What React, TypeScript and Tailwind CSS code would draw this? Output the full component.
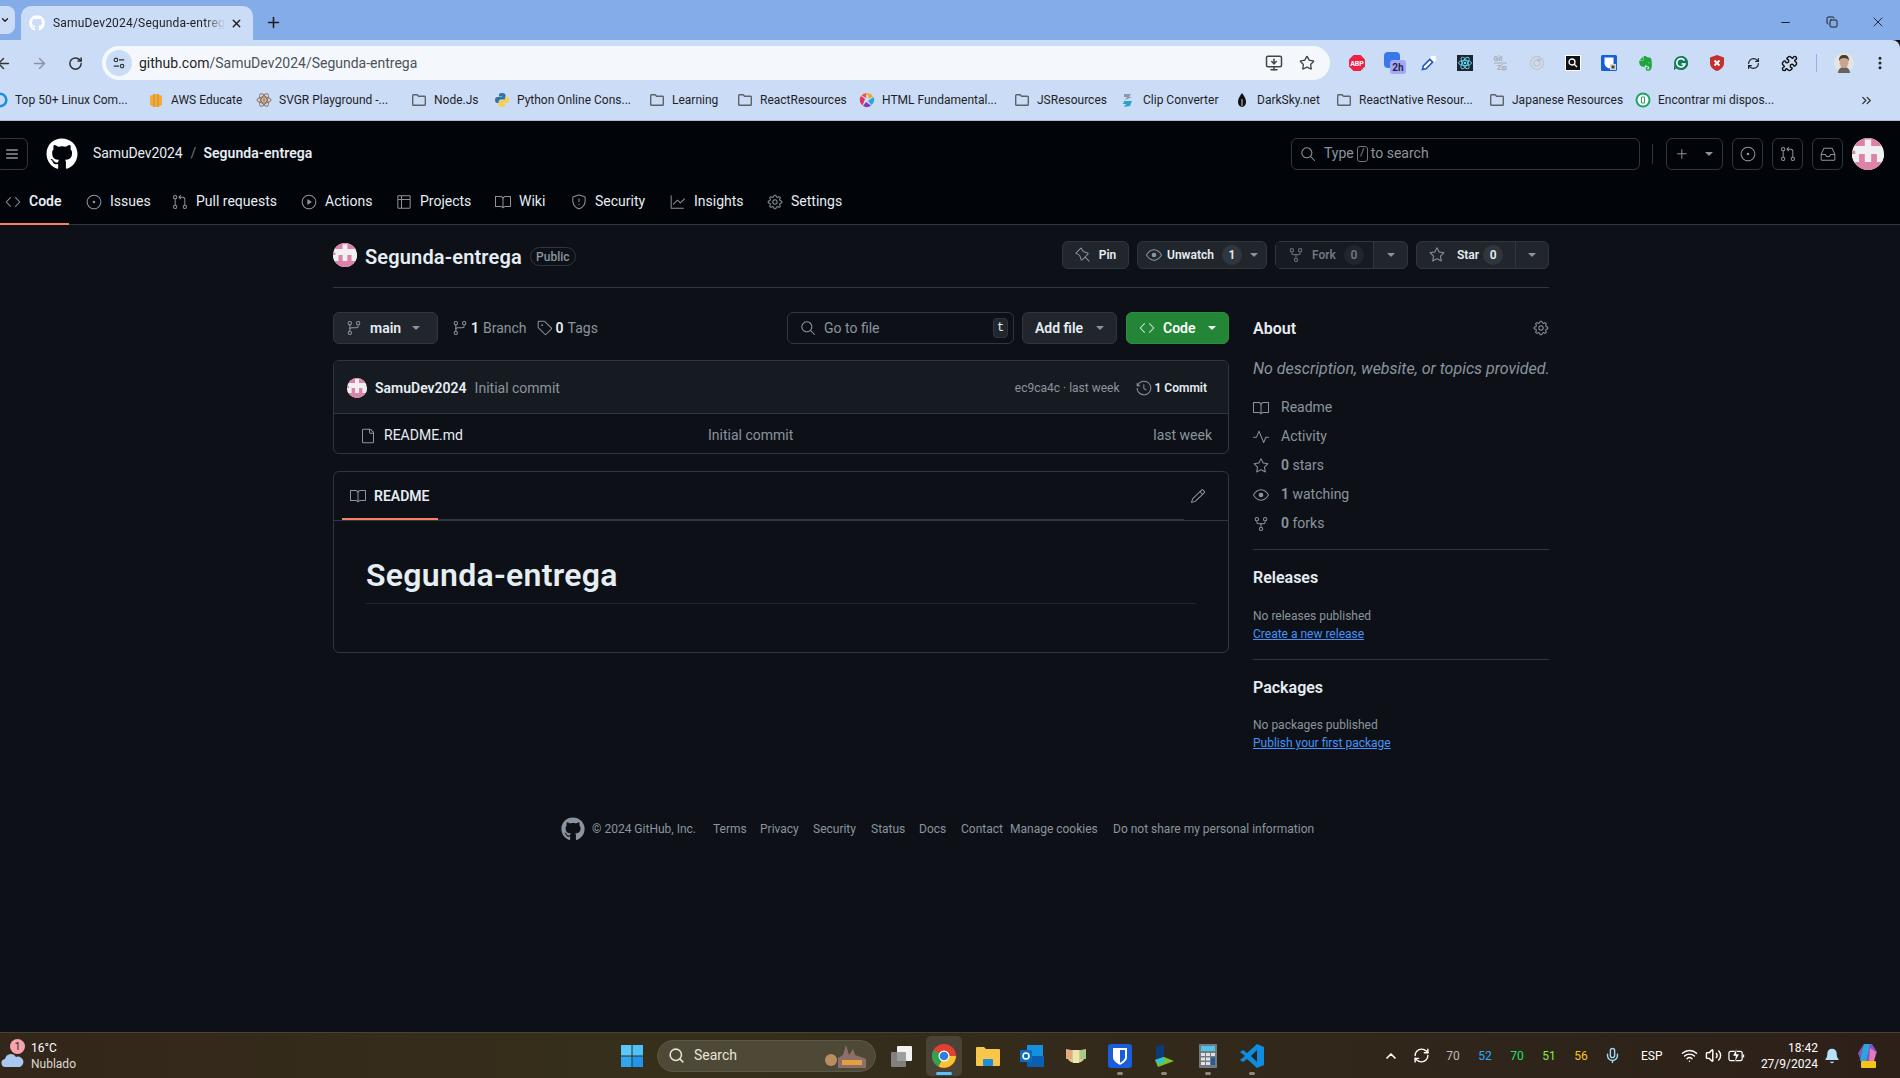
import React from "react";
import {
  GoBook, GoCode, GoGear, GoGitBranch, GoGitPullRequest, GoGraph, GoHistory, GoInbox, GoIssueOpened,
  GoPencil, GoPin, GoPlay, GoPlus, GoPulse, GoRepoForked, GoSearch, GoShield, GoStar,
  GoTable, GoTag, GoTriangleDown, GoEye, GoFile,
} from "react-icons/go";
import { FaGithub as GoMarkGithub, FaEvernote } from "react-icons/fa";
import { LuMenu, LuArrowLeft, LuArrowRight, LuRotateCw, LuX, LuPlus, LuChevronUp, LuMic, LuWifi, LuVolume2, LuBell, LuSearch, LuChevronsRight, LuMinus, LuCopy, LuRefreshCw, LuStar, LuMonitorDown, LuPuzzle, LuEllipsisVertical, LuChevronDown } from "react-icons/lu";

const Avatar = ({ className }: { className: string }) => (
  <svg viewBox="0 0 10 10" className={className}>
    <defs>
      <clipPath id="c"><circle cx="5" cy="5" r="5" /></clipPath>
    </defs>
    <g clipPath="url(#c)">
      <rect width="10" height="10" fill="#f0f0f0" />
      <path d="M1 0h3v2.5H1zM6 0h3v2.5H6zM4 0h2v.5H4z" fill="#dd82a8" />
      <path d="M0 7.5h10v3H0zM2.2 5h1.8v3H2.2zM6 5h1.8v3H6zM0 4h1v1H0z" fill="#dd82a8" />
      <path d="M0 5h2.2v2.5H0zM7.8 5H10v2.5H7.8z" fill="#f0f0f0" />
    </g>
  </svg>
);

const Folder = () => (
  <svg viewBox="0 0 16 16" className="h-4 w-4 shrink-0" fill="none" stroke="#5f6368" strokeWidth="1.4">
    <path d="M1.7 3.5c0-.5.3-.8.8-.8h3.6l1.5 1.6h6c.5 0 .7.3.7.8v7.4c0 .5-.3.8-.7.8H2.5c-.5 0-.8-.3-.8-.8z" />
  </svg>
);

const Ico = ({ children }: { children: React.ReactNode }) => (
  <svg viewBox="0 0 16 16" className="h-4 w-4 shrink-0">{children}</svg>
);

const bookmarks: { w: string; icon: React.ReactNode; text: string }[] = [
  { w: "w-[156px]", text: "Top 50+ Linux Com...", icon: <Ico><circle cx="8" cy="8" r="6.3" fill="none" stroke="#1d8fe0" strokeWidth="2.6" /></Ico> },
  { w: "w-[108px]", text: "AWS Educate", icon: <Ico><path d="M2 4l4-2h4l4 2v9l-4 2H6l-4-2z" fill="#f0ab3c" /><path d="M6 2v13M10 2v13" stroke="#c9821f" strokeWidth=".7" /></Ico> },
  { w: "w-[155px]", text: "SVGR Playground -...", icon: <Ico><g fill="none" stroke="#8a6a48" strokeWidth="1"><ellipse cx="8" cy="8" rx="7" ry="3" /><ellipse cx="8" cy="8" rx="7" ry="3" transform="rotate(60 8 8)" /><ellipse cx="8" cy="8" rx="7" ry="3" transform="rotate(120 8 8)" /></g><circle cx="8" cy="8" r="1.7" fill="#d0803a" /></Ico> },
  { w: "w-[83px]", text: "Node.Js", icon: <Folder /> },
  { w: "w-[155px]", text: "Python Online Cons...", icon: <Ico><path d="M8 1C5 1 5 2.3 5 3v1.5h3.2V5H3.4C2 5 1 6.300 1 8s1 3 2.200 3H5V9.200C5 8 6 7.500 7 7.500h3c1 0 1.500-.7 1.500-1.500V3C11.500 1.800 10 1 8 1z" fill="#3572a5" /><path d="M8 15c3 0 3-1.300 3-2v-1.500H7.800V11h4.800c1.400 0 2.400-1.300 2.400-3s-1-3-2.200-3H11v1.800C11 8 10 8.500 9 8.500H6c-1 0-1.500.7-1.500 1.500v3c0 1.200 1.500 2 3.500 2z" fill="#f7cf45" /></Ico> },
  { w: "w-[88px]", text: "Learning", icon: <Folder /> },
  { w: "w-[122px]", text: "ReactResources", icon: <Folder /> },
  { w: "w-[155px]", text: "HTML Fundamental...", icon: <Ico><path d="M8 1a7 7 0 0 1 6 3.500L10 7z" fill="#f6a623" /><path d="M14.500 5a7 7 0 0 1-2 8L9 9z" fill="#26a5de" /><path d="M12 13.500a7 7 0 0 1-8 .5l3-4z" fill="#7b3fb5" /><path d="M3.500 13.500A7 7 0 0 1 2 4l4 3z" fill="#e8315b" /><path d="M2.500 3.500A7 7 0 0 1 7.500 1L7 6z" fill="#f0562f" /></Ico> },
  { w: "w-[106px]", text: "JSResources", icon: <Folder /> },
  { w: "w-[114px]", text: "Clip Converter", icon: <Ico><path d="M4 2h7l-2 3h3L5 8l2-3H4z" fill="#8d99a5" /><path d="M4 9h8l-2 5-6 1 2-3H3z" fill="#29a5c8" /></Ico> },
  { w: "w-[102px]", text: "DarkSky.net", icon: <Ico><path d="M8 1c3 4 4 6 4 9a4 5 0 0 1-8 0c0-3 1-5 4-9z" fill="#111" /><path d="M8 7v7" stroke="#fff" strokeWidth=".8" /></Ico> },
  { w: "w-[153px]", text: "ReactNative Resour...", icon: <Folder /> },
  { w: "w-[146px]", text: "Japanese Resources", icon: <Folder /> },
  { w: "w-[220px]", text: "Encontrar mi dispos...", icon: <Ico><circle cx="8" cy="8" r="7.500" fill="#1ea362" /><circle cx="8" cy="8" r="5.500" fill="#fff" /><rect x="6" y="4.500" width="4" height="7" rx="1" fill="#1ea362" /><rect x="7" y="5.500" width="2" height="5" fill="#fff" /></Ico> },
];

const tabs: { w: string; label: string; icon: React.ReactNode; active?: boolean }[] = [
  { w: "w-[81px]", label: "Code", icon: <GoCode size={16} />, active: true },
  { w: "w-[86px]", label: "Issues", icon: <GoIssueOpened size={16} /> },
  { w: "w-[129px]", label: "Pull requests", icon: <GoGitPullRequest size={16} /> },
  { w: "w-[95px]", label: "Actions", icon: <GoPlay size={16} /> },
  { w: "w-[99px]", label: "Projects", icon: <GoTable size={16} /> },
  { w: "w-[76px]", label: "Wiki", icon: <GoBook size={16} /> },
  { w: "w-[99px]", label: "Security", icon: <GoShield size={16} /> },
  { w: "w-[97px]", label: "Insights", icon: <GoGraph size={16} /> },
  { w: "w-[90px]", label: "Settings", icon: <GoGear size={16} /> },
];

const Ext = ({ children }: { children: React.ReactNode }) => (
  <div className="flex h-9 w-9 shrink-0 items-center justify-center">{children}</div>
);

const Tb = ({ children, dot, className = "w-[44px]" }: { children: React.ReactNode; dot?: boolean; className?: string }) => (
  <div className={`relative flex h-[40px] shrink-0 items-center justify-center ${className}`}>
    {children}
    {dot && <span className="absolute bottom-[1px] h-[3px] w-[6px] rounded-full bg-[#8d8a84]" />}
  </div>
);

const Temp = ({ c, t, w }: { c: string; t: string; w: string }) => (
  <span className={`${w} ${c} shrink-0 text-center text-[12px]`}>{t}</span>
);

const hdrBtn = "flex h-[32px] items-center justify-center rounded-md border border-[#30363d] text-[#8b949e]";

export default function App() {
  return (
    <div className="flex h-[1078px] w-[1900px] flex-col overflow-hidden bg-[#0d1117] font-['Roboto','Noto_Sans',sans-serif] text-[14px] text-[#e6edf3]">
      {/* Chrome tab strip */}
      <div className="flex h-[40px] shrink-0 items-end bg-[#83ace9] pl-0">
        <div className="mb-[6px] flex h-[28px] w-[15px] items-center justify-end rounded-r-lg bg-[#cbdcf7] pr-[5px] text-[#1f1f1f]">
          <LuChevronDown size={12} strokeWidth={3} />
        </div>
        <div className="ml-[6px] flex h-[34px] w-[232px] items-center rounded-t-[10px] bg-[#cbdcf7] pl-[8px] text-[#1f1f1f]">
          <GoMarkGithub size={16} className="text-white" />
          <span className="ml-[8px] w-[172px] overflow-hidden whitespace-nowrap text-[12px] leading-none tracking-[0.2px] [mask-image:linear-gradient(90deg,#000_88%,transparent)]">SamuDev2024/Segunda-entreg</span>
          <LuX size={13} strokeWidth={2.5} className="ml-[5px]" />
        </div>
        <LuPlus size={17} strokeWidth={2.2} className="mb-[9px] ml-[12px] text-[#1f1f1f]" />
        <div className="mb-[10px] ml-auto flex items-center text-[#1f1f1f]">
          <LuMinus size={13} className="mr-[34px]" />
          <LuCopy size={12} className="mr-[32px]" />
          <LuX size={16} strokeWidth={1.4} className="mr-[14px]" />
        </div>
      </div>
      {/* Chrome toolbar */}
      <div className="flex h-[40px] shrink-0 items-center rounded-tr-lg bg-[#cbdcf7] text-[#333]">
        <LuArrowLeft size={17} className="ml-[-5px] mt-[6px] shrink-0" />
        <LuArrowRight size={17} className="ml-[19px] mt-[6px] shrink-0 text-[#8a939f]" />
        <LuRotateCw size={15} strokeWidth={2.4} className="ml-[20px] mt-[6px] shrink-0" />
        <div className="ml-[19px] mt-[6px] flex h-[34px] w-[1228px] shrink-0 items-center rounded-full bg-[#f4f8fd] pl-[4px]">
          <div className="flex h-[26px] w-[26px] items-center justify-center rounded-full bg-[#cbdcf7]">
            <svg viewBox="0 0 16 16" className="h-[14px] w-[14px]" fill="none" stroke="#333" strokeWidth="1.300"><circle cx="4.500" cy="4.500" r="2" /><path d="M8 4.500h6M2 11.500h6" /><circle cx="11.500" cy="11.500" r="2" /></svg>
          </div>
          <span className="ml-[7px] text-[14px] text-[#1f1f1f]">github.com<span className="text-[#4e5257]">/SamuDev2024/Segunda-entrega</span></span>
          <LuMonitorDown size={18} className="ml-auto shrink-0 text-[#444]" />
          <LuStar size={16} className="ml-[16px] mr-[15px] shrink-0 text-[#444]" />
        </div>
        <div className="ml-[9px] mt-[6px] flex items-center">
          <Ext><svg viewBox="0 0 18 18" className="h-[18px] w-[18px]"><path d="M5.500 1h7L17 5.500v7L12.500 17h-7L1 12.500v-7z" fill="#ef2146" /><text x="9" y="11.500" textAnchor="middle" fontSize="7" fontWeight="700" fill="#fff">ABP</text></svg></Ext>
          <Ext>
            <div className="relative h-[22px] w-[22px] translate-x-[2px]">
              <div className="absolute left-0 top-0 h-[16px] w-[16px] rounded-sm bg-[#3b78e7]" />
              <div className="absolute bottom-0 right-0 flex h-[14px] w-[16px] items-center justify-center rounded-[3px] bg-[#a3a7f7] text-[10px] font-semibold text-[#20223a]">2h</div>
            </div>
          </Ext>
          <Ext><svg viewBox="0 0 18 18" className="h-[18px] w-[18px]"><path d="M2.500 15.500l.8-3.500 6.500-6.500 2.700 2.700-6.500 6.500z" fill="#fff" stroke="#2456c7" strokeWidth="1.600" /><path d="M10 3.500l4.500 4.500 2-2.500-1-1 .5-2-1.500-1-2 .8-1-.8z" fill="#fff" /></svg></Ext>
          <Ext><svg viewBox="0 0 16 16" className="h-4 w-4"><rect width="16" height="16" fill="#20232a" /><g fill="none" stroke="#61dafb" strokeWidth=".9"><ellipse cx="8" cy="8" rx="6.500" ry="2.600" /><ellipse cx="8" cy="8" rx="6.500" ry="2.600" transform="rotate(60 8 8)" /><ellipse cx="8" cy="8" rx="6.500" ry="2.600" transform="rotate(120 8 8)" /></g><circle cx="8" cy="8" r="1.300" fill="#61dafb" /></svg></Ext>
          <Ext><svg viewBox="0 0 16 16" className="h-4 w-4" fill="#a4a9ae"><text x="5" y="6" textAnchor="middle" fontSize="7" fontWeight="700">Git</text><path d="M1 7.500h13v1H1z" /><text x="9" y="15" textAnchor="middle" fontSize="7" fontWeight="700">Zip</text></svg></Ext>
          <Ext><svg viewBox="0 0 16 16" className="h-4 w-4" fill="none" stroke="#c2c6cc" strokeWidth="1.300"><circle cx="8" cy="8" r="6.500" /><circle cx="8" cy="8" r="3" /><circle cx="10" cy="5" r="1.200" fill="#9aa0a6" /></svg></Ext>
          <Ext><svg viewBox="0 0 16 16" className="h-4 w-4"><rect width="16" height="16" fill="#fff" /><rect x="1" y="1" width="14" height="14" fill="#111" /><circle cx="7" cy="7" r="3" fill="none" stroke="#fff" strokeWidth="1.300" /><path d="M9 9l3 3" stroke="#fff" strokeWidth="1.300" /></svg></Ext>
          <Ext><svg viewBox="0 0 16 16" className="h-4 w-4"><rect width="16" height="16" rx="1.500" fill="#175ddc" /><path d="M3.500 2.500h9v6c0 2.500-2.500 4-4.500 5-2-1-4.500-2.500-4.500-5z" fill="#fff" /><rect x="9" y="9" width="6" height="6" fill="#d5d8dc" /><rect x="10.500" y="10.500" width="3" height="3" fill="#444" /></svg></Ext>
          <Ext><FaEvernote size={17} className="text-[#1fa53a]" /></Ext>
          <Ext><svg viewBox="0 0 16 16" className="h-4 w-4"><path d="M8 1a7 7 0 1 1-7 7v7l3-2a7 7 0 0 0 4 2" fill="#0f7a5c" /><circle cx="8" cy="8" r="7" fill="#0f7a5c" /><path d="M11.500 5.500A4.200 4.200 0 1 0 12 9H8.500" fill="none" stroke="#fff" strokeWidth="1.600" /></svg></Ext>
          <Ext><svg viewBox="0 0 16 18" className="h-[18px] w-4"><path d="M8 1l7 2.500V9c0 4-3 6.500-7 8-4-1.500-7-4-7-8V3.500z" fill="#c4302b" /><path d="M5.500 6.500l5 5M10.500 6.500l-5 5" stroke="#fff" strokeWidth="1.800" /></svg></Ext>
          <Ext><LuRefreshCw size={13} strokeWidth={2.2} className="text-[#222]" /></Ext>
          <Ext><LuPuzzle size={17} strokeWidth={2} className="text-[#111]" /></Ext>
          <div className="ml-[9px] h-[18px] w-[1px] shrink-0 bg-[#8fb3e8]" />
          <div className="flex h-9 w-[36px] items-center justify-center pl-[18px]">
            <svg viewBox="0 0 20 20" className="h-[20px] w-[20px] shrink-0"><circle cx="10" cy="10" r="10" fill="#e4e4e0" /><path d="M4 20c0-4 3-6 6-6s6 2 6 6z" fill="#66635f" /><ellipse cx="10" cy="9" rx="4.500" ry="6" fill="#c9a48f" /><path d="M5 8c0-5 2-6 5-6s5 1 5 6c-1-2-2-3-5-3S6 6 5 8z" fill="#4a3a30" /></svg>
          </div>
          <div className="ml-[9px] flex h-9 w-9 items-center justify-center"><LuEllipsisVertical size={16} strokeWidth={2.5} className="text-[#222]" /></div>
        </div>
      </div>
      {/* Bookmarks */}
      <div className="flex h-[41px] shrink-0 items-center border-b border-[#aebcd4] bg-[#cbdcf7] text-[12px] text-[#1f1f1f]">
        <div className="ml-[-8px] flex items-center">
          {bookmarks.map((b) => (
            <div key={b.text} className={`flex shrink-0 items-center gap-[7px] overflow-hidden whitespace-nowrap ${b.w}`}>
              {b.icon}
              <span>{b.text}</span>
            </div>
          ))}
        </div>
        <LuChevronsRight size={15} className="ml-[4px] shrink-0 text-[#333]" />
      </div>
      {/* GitHub header */}
      <header className="shrink-0 border-b border-[#30363d] bg-[#010409]">
        <div className="flex h-[65px] items-center">
          <div className={`${hdrBtn} ml-[-4px] w-[32px] text-[#8b949e]`}><LuMenu size={16} /></div>
          <GoMarkGithub size={32} className="ml-[18px] shrink-0 text-white" />
          <span className="ml-[15px] tracking-[-0.1px]">SamuDev2024</span>
          <span className="ml-[8px] text-[#6e7681]">/</span>
          <span className="ml-[7px] font-semibold tracking-[0.05px]">Segunda-entrega</span>
          <div className={`${hdrBtn} ml-auto w-[349px] justify-start px-[8px]`}>
            <GoSearch size={16} />
            <span className="ml-[8px]">Type</span>
            <span className="mx-[3px] flex h-[16px] w-[11px] items-center justify-center rounded-[3px] border border-[#6e7681] text-[11px]">/</span>
            <span>to search</span>
          </div>
          <div className="ml-[12px] h-[20px] w-[1px] bg-[#30363d]" />
          <div className={`${hdrBtn} ml-[13px] w-[57px] gap-[12px]`}><GoPlus size={16} /><GoTriangleDown size={14} /></div>
          <div className={`${hdrBtn} ml-[9px] w-[31px]`}><GoIssueOpened size={16} /></div>
          <div className={`${hdrBtn} ml-[9px] w-[31px]`}><GoGitPullRequest size={16} /></div>
          <div className={`${hdrBtn} ml-[9px] w-[31px]`}><GoInbox size={16} /></div>
          <Avatar className="ml-[9px] mr-[16px] h-[32px] w-[32px] shrink-0" />
        </div>
        <nav className="flex h-[38px] pl-[5px]">
          {tabs.map((t) => (
            <div key={t.label} className={`relative flex h-[31px] shrink-0 items-center gap-[8px] ${t.w} ${t.active ? "font-semibold" : ""}`}>
              <span className="text-[#8b949e]">{t.icon}</span>
              <span>{t.label}</span>
              {t.active && <span className="absolute bottom-[-8px] left-[-5px] h-[2px] w-[69px] bg-[#f78166]" />}
            </div>
          ))}
        </nav>
      </header>
      {/* Page */}
      <main className="min-h-0 flex-1">
        <div className="ml-[333px] w-[1216px]">
          <div className="flex h-[63px] border-b border-[#30363d] pt-[16px]">
            <Avatar className="mt-[2px] h-[24px] w-[24px] shrink-0" />
            <span className="ml-[8px] mt-[2px] text-[20px] font-semibold leading-[28px] tracking-[0.15px]">Segunda-entrega</span>
            <span className="ml-[8px] mt-[6px] flex h-[19px] w-[46px] items-center justify-center rounded-full border border-[#30363d] text-[12px] font-medium text-[#8b949e]">Public</span>
            <div className="ml-auto flex h-[28px] gap-[8px] text-[12px] font-semibold">
              <div className="flex w-[67px] items-center justify-center gap-[8px] rounded-md border border-[#30363d] bg-[#21262d]"><GoPin size={16} className="text-[#8b949e]" />Pin</div>
              <div className="flex w-[130px] items-center gap-[4px] rounded-md border border-[#30363d] bg-[#21262d] pl-[8px]">
                <GoEye size={16} className="text-[#8b949e]" />
                <span className="ml-[1px]">Unwatch</span>
                <span className="ml-[4px] flex h-[20px] w-[20px] items-center justify-center rounded-full bg-[#30363d]">1</span>
                <GoTriangleDown size={14} className="ml-[1px] text-[#8b949e]" />
              </div>
              <div className="flex w-[133px] rounded-md border border-[#30363d] bg-[#21262d]">
                <div className="flex w-[98px] items-center gap-[8px] border-r border-[#30363d] bg-[#161b22] pl-[12px] text-[#6e7681]">
                  <GoRepoForked size={16} />
                  <span>Fork</span>
                  <span className="flex h-[20px] w-[20px] items-center justify-center rounded-full bg-[#21262d]">0</span>
                </div>
                <div className="flex flex-1 items-center justify-center"><GoTriangleDown size={14} className="text-[#8b949e]" /></div>
              </div>
              <div className="flex w-[133px] rounded-md border border-[#30363d] bg-[#21262d]">
                <div className="flex w-[99px] items-center border-r border-[#30363d] pl-[12px]">
                  <GoStar size={16} className="text-[#8b949e]" />
                  <span className="ml-[12px]">Star</span>
                  <span className="ml-[4px] flex h-[20px] w-[20px] items-center justify-center rounded-full bg-[#30363d]">0</span>
                </div>
                <div className="flex flex-1 items-center justify-center"><GoTriangleDown size={14} className="text-[#8b949e]" /></div>
              </div>
            </div>
          </div>
          <div className="mt-[24px] flex gap-[24px]">
            <div className="w-[896px] shrink-0">
              <div className="flex h-[32px] items-center">
                <div className="flex h-[32px] w-[105px] items-center rounded-md border border-[#30363d] bg-[#21262d] pl-[12px] font-semibold">
                  <GoGitBranch size={16} className="text-[#8b949e]" />
                  <span className="ml-[8px]">main</span>
                  <GoTriangleDown size={14} className="ml-[8px] text-[#8b949e]" />
                </div>
                <div className="ml-[14px] flex items-center text-[#8b949e]"><GoGitBranch size={16} /><span className="ml-[3px] font-semibold text-[#e6edf3]">1</span><span className="ml-[4px]">Branch</span></div>
                <div className="ml-[10px] flex items-center text-[#8b949e]"><GoTag size={16} /><span className="ml-[3px] font-semibold text-[#e6edf3]">0</span><span className="ml-[4px]">Tags</span></div>
                <div className="ml-auto flex h-[32px] w-[227px] items-center rounded-md border border-[#30363d] pl-[12px] text-[#8b949e]">
                  <GoSearch size={16} />
                  <span className="ml-[8px]">Go to file</span>
                  <span className="ml-auto mr-[5px] flex h-[20px] w-[15px] items-center justify-center rounded-[4px] border border-[#30363d] bg-[#21262d] font-['Liberation_Mono',monospace] text-[12px] text-[#e6edf3]">t</span>
                </div>
                <div className="ml-[8px] flex h-[32px] w-[95px] items-center rounded-md border border-[#30363d] bg-[#21262d] pl-[12px] font-semibold">
                  Add file<GoTriangleDown size={14} className="ml-[10px] text-[#8b949e]" />
                </div>
                <div className="ml-[9px] flex h-[32px] w-[103px] items-center rounded-md border border-[#2f8c3e] bg-[#238636] pl-[12px] font-semibold text-white">
                  <GoCode size={16} className="text-[#d0e6d4]" />
                  <span className="ml-[8px]">Code</span>
                  <GoTriangleDown size={14} className="ml-[9px]" />
                </div>
              </div>
              <div className="mt-[16px] overflow-hidden rounded-md border border-[#30363d]">
                <div className="flex h-[53px] items-center border-b border-[#30363d] bg-[#161b22] pl-[13px] pt-[2px]">
                  <Avatar className="h-[20px] w-[20px] shrink-0" />
                  <span className="ml-[8px] font-semibold">SamuDev2024</span>
                  <span className="ml-[8px] text-[#8b949e]">Initial commit</span>
                  <span className="ml-auto text-[12px] text-[#8b949e]">ec9ca4c · last week</span>
                  <GoHistory size={16} className="ml-[16px] text-[#8b949e]" />
                  <span className="ml-[3px] mr-[21px] text-[12px] font-semibold">1 Commit</span>
                </div>
                <div className="flex h-[39px] items-center pl-[26px] pt-[4px]">
                  <GoFile size={16} className="shrink-0 text-[#8b949e]" />
                  <span className="ml-[8px] w-[324px]">README.md</span>
                  <span className="text-[#8b949e]">Initial commit</span>
                  <span className="ml-auto mr-[16px] text-[#8b949e]">last week</span>
                </div>
              </div>
              <div className="mt-[17px] h-[182px] rounded-md border border-[#30363d]">
                <div className="relative flex h-[49px] items-center border-b border-[#30363d] pl-[16px] font-semibold">
                  <GoBook size={16} className="text-[#8b949e]" />
                  <span className="ml-[8px]">README</span>
                  <GoPencil size={16} className="ml-auto mr-[22px] text-[#8b949e]" />
                  <span className="absolute bottom-[0px] left-[8px] h-[2px] w-[96px] bg-[#f78166]" />
                  <span className="absolute bottom-[0px] left-[104px] h-[1px] w-[746px] bg-[#30363d]" />
                </div>
                <div className="px-[32px] pt-[34px]">
                  <h1 className="border-b border-[#21262d] pb-[8px] text-[32px] font-semibold leading-[40px] tracking-[0.3px]">Segunda-entrega</h1>
                </div>
              </div>
            </div>
            <aside className="w-[296px] shrink-0">
              <div className="flex h-[32px] items-center justify-between">
                <span className="mt-[1px] text-[16px] font-semibold">About</span>
                <GoGear size={16} className="text-[#8b949e]" />
              </div>
              <p className="mt-[16px] whitespace-nowrap text-[16px] italic leading-[18px] text-[#8b949e]">No description, website, or topics provided.</p>
              <div className="mt-[15px] flex flex-col text-[#8b949e]">
                <div className="flex h-[29px] items-center gap-[12px]"><GoBook size={16} />Readme</div>
                <div className="flex h-[29px] items-center gap-[12px]"><GoPulse size={16} />Activity</div>
                <div className="flex h-[29px] items-center gap-[12px]"><GoStar size={16} /><span><b className="font-semibold">0</b> stars</span></div>
                <div className="flex h-[29px] items-center gap-[12px]"><GoEye size={16} /><span><b className="font-semibold">1</b> watching</span></div>
                <div className="flex h-[29px] items-center gap-[12px]"><GoRepoForked size={16} /><span><b className="font-semibold">0</b> forks</span></div>
              </div>
              <div className="mt-[11px] border-t border-[#30363d] pt-[16px]">
                <h2 className="text-[16px] font-semibold leading-[24px]">Releases</h2>
                <p className="mt-[17px] text-[12px] leading-[18px] text-[#8b949e]">No releases published</p>
                <a className="block text-[12px] leading-[18px] text-[#4493f8] underline">Create a new release</a>
              </div>
              <div className="mt-[16px] border-t border-[#30363d] pt-[16px]">
                <h2 className="text-[16px] font-semibold leading-[24px]">Packages</h2>
                <p className="mt-[16px] text-[12px] leading-[18px] text-[#8b949e]">No packages published</p>
                <a className="block text-[12px] leading-[18px] text-[#4493f8] underline">Publish your first package</a>
              </div>
            </aside>
          </div>
        </div>
        <footer className="ml-[561px] mt-[65px] flex h-[24px] items-center text-[12px] text-[#8b949e]">
          <span className="w-[31px] shrink-0"><GoMarkGithub size={24} /></span>
          <span className="w-[121px]">© 2024 GitHub, Inc.</span>
          <span className="w-[47px]">Terms</span>
          <span className="w-[53px]">Privacy</span>
          <span className="w-[58px]">Security</span>
          <span className="w-[48px]">Status</span>
          <span className="w-[42px]">Docs</span>
          <span className="w-[49px]">Contact</span>
          <span className="w-[103px]">Manage cookies</span>
          <span>Do not share my personal information</span>
        </footer>
      </main>
      {/* Windows taskbar */}
      <div className="flex h-[46px] shrink-0 items-center border-t border-[#45433c] bg-[linear-gradient(90deg,#33261a,#36301b_35%,#33291b_60%,#2c2019)] text-white">
        <div className="relative flex w-[620px] shrink-0 items-center">
          <svg viewBox="0 0 24 18" className="ml-[1px] mt-[6px] h-[18px] w-[24px] shrink-0"><path d="M5 17a4 4 0 0 1-1-8 6 6 0 0 1 11-2 5 5 0 0 1 4 10z" fill="#a9c8ef" /></svg>
          <span className="absolute left-[10px] top-[-1px] flex h-[15px] w-[15px] items-center justify-center rounded-full bg-[#f9a4ac] text-[10px] text-[#222]">1</span>
          <div className="ml-[6px] flex flex-col text-[12px] leading-[16px]">
            <span>16°C</span>
            <span className="text-[#dcd8d0]">Nublado</span>
          </div>
        </div>
        <svg viewBox="0 0 24 24" className="h-[24px] w-[24px] shrink-0"><rect x="1" y="1" width="10.500" height="10.500" fill="#5ac8fa" /><rect x="12.500" y="1" width="10.500" height="10.500" fill="#4fc0f8" /><rect x="1" y="12.500" width="10.500" height="10.500" fill="#2fa6f0" /><rect x="12.500" y="12.500" width="10.500" height="10.500" fill="#1f96ec" /></svg>
        <div className="ml-[13px] flex h-[32px] w-[219px] shrink-0 items-center rounded-full border border-[#5c5847] bg-[#4e4836] pl-[10px] text-[14px] text-[#e8e4d8]">
          <LuSearch size={17} strokeWidth={2.2} />
          <span className="ml-[9px]">Search</span>
          <svg viewBox="0 0 52 28" className="ml-auto mr-[1px] h-[28px] w-[52px]"><circle cx="9" cy="18" r="6" fill="#b98d60" /><path d="M16 26V16l5-3 3-10 3 10 4-6 2 6 6 2 5 2v9z" fill="#8d6f6a" /><rect x="20" y="18" width="20" height="5" fill="#e4a03d" /></svg>
        </div>
        <Tb className="ml-[2px] w-[46px]"><svg viewBox="0 0 26 26" className="h-[26px] w-[26px]"><rect x="9" y="3" width="15" height="15" rx="1" fill="#f2f2f2" /><rect x="3" y="9" width="15" height="15" rx="1" fill="#8f8f8f" fillOpacity=".85" /></svg></Tb>
        <div className="relative ml-[2px] flex h-[40px] w-[36px] shrink-0 items-center justify-center rounded-[5px] bg-[#4a4438]">
          <svg viewBox="0 0 24 24" className="h-[24px] w-[24px]"><circle cx="12" cy="12" r="12" fill="#e4402f" /><path d="M12 12L1.600 6a12 12 0 0 0 5 16.500z" fill="#2ea44f" /><path d="M12 12l-5.400 10.500A12 12 0 0 0 24 12z" fill="#f7c430" /><circle cx="12" cy="12" r="5.500" fill="#fff" /><circle cx="12" cy="12" r="4.300" fill="#2f7de1" /></svg>
          <span className="absolute bottom-[1px] h-[3px] w-[16px] rounded-full bg-[#5cc2f5]" />
        </div>
        <Tb className="ml-[4px] w-[44px]"><svg viewBox="0 0 24 22" className="h-[22px] w-[24px]"><path d="M0 3a1 1 0 0 1 1-1h7l2 2h13a1 1 0 0 1 1 1v15a1 1 0 0 1-1 1H1a1 1 0 0 1-1-1z" fill="#f7c64a" /><rect x="7" y="14" width="10" height="7" rx="1" fill="#1e8fd6" /></svg></Tb>
        <Tb><svg viewBox="0 0 24 24" className="h-[24px] w-[24px]"><rect x="7" y="1" width="16" height="13" fill="#1490df" /><path d="M7 12h17v10a1 1 0 0 1-1 1H8a1 1 0 0 1-1-1z" fill="#0a5fb0" /><rect x="0" y="6" width="12" height="12" rx="1" fill="#0f6cbd" /><circle cx="6" cy="12" r="3" fill="none" stroke="#fff" strokeWidth="1.600" /></svg></Tb>
        <Tb><svg viewBox="0 0 22 16" className="h-[16px] w-[22px]"><path d="M1 1l5 1h10l5-1-1 7c-1 5-4 7-9 7s-8-2-9-7z" fill="#d9c989" /><rect x="8" y="2" width="6" height="13" fill="#eee4b0" /><rect x="1" y="2" width="6" height="9" fill="#e0a97e" /><rect x="15" y="2" width="6" height="9" fill="#a5c986" /></svg></Tb>
        <Tb dot><svg viewBox="0 0 24 24" className="h-[24px] w-[24px]"><rect width="24" height="24" rx="3" fill="#175ddc" /><path d="M5 4h14v9c0 4-4 6-7 8-3-2-7-4-7-8z" fill="#fff" /><path d="M12 6h5v7c0 3-3 4.500-5 6z" fill="#175ddc" /></svg></Tb>
        <Tb dot><svg viewBox="0 0 24 24" className="h-[24px] w-[24px]"><path d="M4 3l8-3v13l-8 3z" fill="#0b3c78" /><path d="M3 16l9-3 10 4-16 6z" fill="#7fc31c" /><path d="M3 16l9-3 1 4-5 4z" fill="#35c1d4" /></svg></Tb>
        <Tb dot><svg viewBox="0 0 18 24" className="h-[24px] w-[18px]"><rect width="18" height="24" rx="1" fill="#737a80" /><rect x="2" y="2" width="14" height="5" fill="#4fc3e8" /><g fill="#dfe3e6"><rect x="2" y="9" width="4" height="3" /><rect x="7" y="9" width="4" height="3" /><rect x="12" y="9" width="4" height="3" /><rect x="2" y="13.500" width="4" height="3" /><rect x="7" y="13.500" width="4" height="3" /><rect x="2" y="18" width="4" height="3" /><rect x="7" y="18" width="4" height="3" /></g><rect x="12" y="13.500" width="4" height="7.500" fill="#235d9e" /></svg></Tb>
        <Tb dot><svg viewBox="0 0 24 24" className="h-[24px] w-[24px]"><path d="M17 0l7 3v18l-7 3-10-9-4 3-3-2 5-4-5-4 3-2 4 3z" fill="#0f8ce0" /><path d="M17 6L11 12l6 6z" fill="#2b2418" /></svg></Tb>
        <div className="ml-[109px] flex items-center">
          <LuChevronUp size={16} strokeWidth={2.5} className="shrink-0" />
          <LuRefreshCw size={17} className="ml-[14px] shrink-0" />
          <div className="ml-[7px] flex items-center">
            <Temp c="text-[#bdbdbd]" t="70" w="w-[32px]" />
            <Temp c="text-[#2aa9ff]" t="52" w="w-[32px]" />
            <Temp c="text-[#22e06a]" t="70" w="w-[32px]" />
            <Temp c="text-[#7cf03a]" t="51" w="w-[32px]" />
            <Temp c="text-[#f7c81e]" t="56" w="w-[32px]" />
          </div>
          <LuMic size={17} className="ml-[7px] shrink-0 text-[#9ed8f2]" />
          <span className="ml-[20px] w-[25px] text-[12px]">ESP</span>
          <LuWifi size={17} className="ml-[15px] shrink-0" />
          <LuVolume2 size={17} className="ml-[7px] shrink-0" />
          <svg viewBox="0 0 18 16" fill="none" stroke="#fff" strokeWidth="1.300" className="ml-[6px] h-[16px] w-[17px] shrink-0"><rect x="1" y="3" width="14" height="10" rx="2" /><path d="M16.500 6.500v3" /><path d="M9 0L5 8h3l-1 7 5-9H9z" fill="#fff" stroke="#2c2019" strokeWidth=".6" /></svg>
          <div className="ml-[5px] flex w-[68px] shrink-0 flex-col items-end text-[12px] leading-[16px]">
            <span>18:42</span>
            <span>27/9/2024</span>
          </div>
          <LuBell size={16} fill="#b6e1f7" className="ml-[6px] shrink-0 text-[#b6e1f7]" />
          <svg viewBox="0 0 24 26" className="ml-[16px] h-[26px] w-[24px] shrink-0"><path d="M8 1h8l5 8-3 9H5L2 10z" fill="#7e57c2" /><path d="M8 1h6l-4 17H4z" fill="#2aa6dc" /><path d="M14 5l6 4-2 9h-5z" fill="#e879b9" /><rect x="5" y="18" width="15" height="7" rx="1" fill="#f3c316" /></svg>
        </div>
      </div>
    </div>
  );
}
